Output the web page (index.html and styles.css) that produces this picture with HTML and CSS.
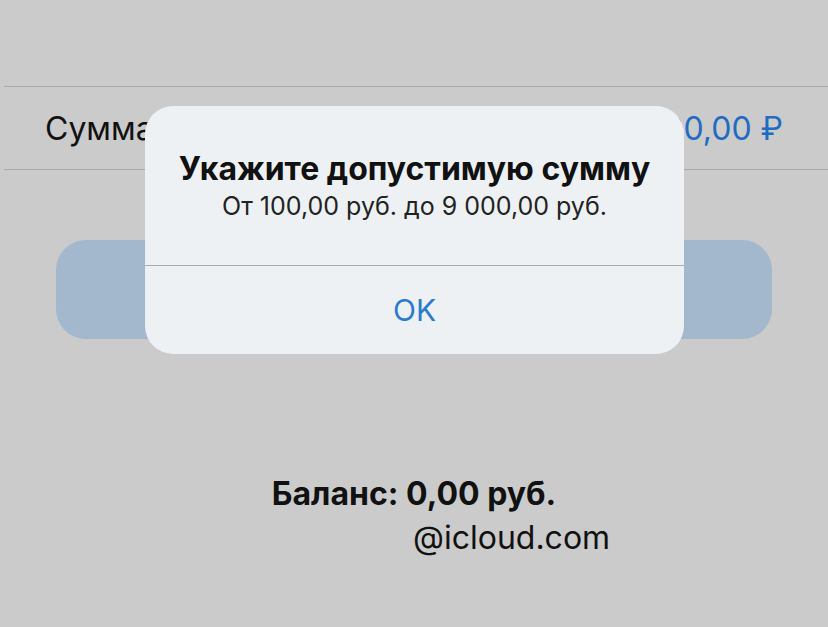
FILE: index.html
```html
<!DOCTYPE html>
<html lang="ru">
<head>
    <meta charset="UTF-8">
    <meta name="viewport" content="width=device-width, initial-scale=1.0">
    <title>Пополнение</title>
    <link rel="stylesheet" href="styles.css">
</head>
<body>
    <div class="screen">
        <!-- СУММА -->
        <div class="amount-row">
            <span class="amount-label">Сумма</span>
            <span class="amount-value">100,00 ₽</span>
        </div>

        <div class="pay-btn"></div>

        <!-- БАЛАНС -->
        <div class="balance">
            <div class="balance-sum">Баланс: 0,00 руб.</div>
            <div class="balance-email">@icloud.com</div>
        </div>

        <!-- АЛЕРТ -->
        <div class="alert">
            <div class="alert-body">
                <div class="alert-title">Укажите допустимую сумму</div>
                <div class="alert-text">От 100,00 руб. до 9 000,00 руб.</div>
            </div>
            <div class="alert-action">OK</div>
        </div>
    </div>
</body>
</html>
```

FILE: styles.css
```css
body {
    margin: 0;
    background: #cbcbcb;
    font-family: Inter, Roboto, "Liberation Sans", sans-serif;
    overflow: hidden;
}
.screen {
    position: relative;
    width: 828px;
    height: 627px;
    padding-top: 86px;
    box-sizing: border-box;
}
.amount-row {
    margin-left: 4px;
    height: 82px;
    border-top: 1px solid #a8a8a8;
    border-bottom: 1px solid #a8a8a8;
    display: flex;
    align-items: center;
    justify-content: space-between;
    padding: 0 45px 0 41px;
    font-size: 32px;
}
.amount-label {
    color: #111;
}
.amount-value {
    color: #1f6cc0;
}
.pay-btn {
    margin: 70px 56px 0;
    height: 99px;
    border-radius: 30px;
    background: #a3b8cd;
}
.balance {
    margin-top: 135px;
    font-size: 32px;
    color: #111;
}
.balance-sum {
    text-align: center;
    font-weight: bold;
}
.balance-email {
    padding-left: 413px;
    margin-top: 5px;
}
.alert {
    position: absolute;
    left: 145px;
    top: 106px;
    width: 539px;
    height: 248px;
    border-radius: 28px;
    background: #eef1f4;
    display: flex;
    flex-direction: column;
    text-align: center;
}
.alert-body {
    height: 160px;
    box-sizing: border-box;
    padding-top: 43px;
    border-bottom: 1px solid #a9adb2;
}
.alert-title {
    font-size: 32px;
    font-weight: bold;
    color: #111;
}
.alert-text {
    margin-top: 3px;
    font-size: 25px;
    color: #222;
}
.alert-action {
    flex: 1;
    display: flex;
    align-items: center;
    justify-content: center;
    font-size: 30px;
    color: #2a7ccb;
}
```
